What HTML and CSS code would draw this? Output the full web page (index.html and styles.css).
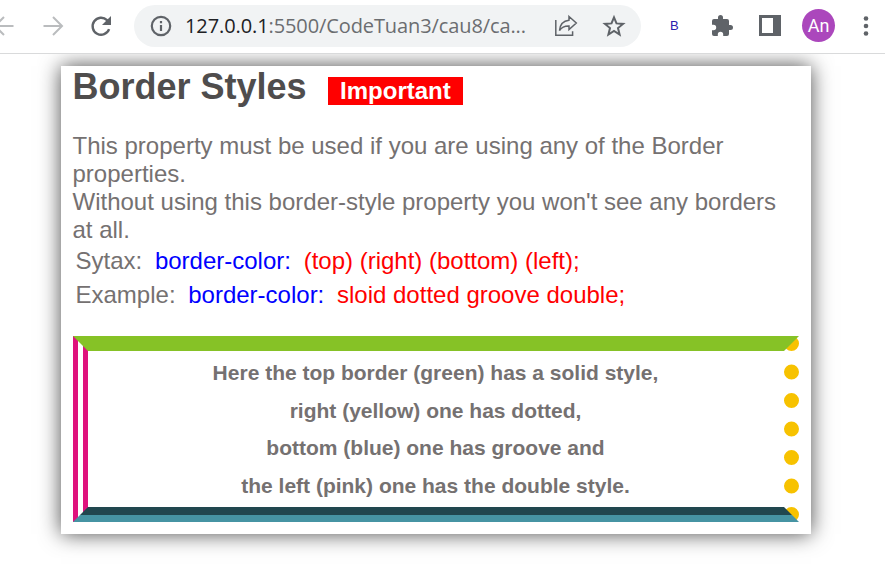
FILE: index.html
```html
<!DOCTYPE html>
<html lang="en">
<head>
<meta charset="utf-8">
<title>Border Styles</title>
<link rel="stylesheet" href="styles.css">
</head>
<body>
<header class="toolbar">
  <svg class="icon back" width="22" height="22" viewBox="0 0 22 22"><path d="M20.500 11H2M11 2L2 11l9 9"/></svg>
  <svg class="icon forward" width="22" height="22" viewBox="0 0 22 22"><path d="M1.500 11H20M11 2l9 9-9 9"/></svg>
  <svg class="icon reload" width="24" height="24" viewBox="0 0 24 24"><path class="line" d="M20.100 15.200A8.500 8.500 0 1 1 18 6.100L20 8"/><path class="solid" d="M22 2v9h-9z"/></svg>
  <div class="address">
    <svg class="icon info" width="22" height="22" viewBox="0 0 22 22"><circle cx="11" cy="11" r="9.200"/><path d="M11 10v6M11 6v2.200"/></svg>
    <span class="url"><span class="host">127.0.0.1</span>:5500/CodeTuan3/cau8/ca...</span>
    <svg class="icon share" width="24" height="24" viewBox="0 0 24 24"><path d="M1.800 6v15.200h16.800v-4M15 2.500l7.300 6.500-7.300 6.500V12C10.500 11.800 7.500 13.500 5.500 16.500 6 10.500 9.500 6.800 15 6.200z"/></svg>
    <svg class="icon star" width="24" height="24" viewBox="0 0 24 24"><path d="M12 3.300l2.500 6.100 6.600.5-5.100 4.200 1.600 6.400-5.600-3.500-5.600 3.500L8 14.100 2.900 9.900l6.600-.5z"/></svg>
  </div>
  <span class="ext">B</span>
  <svg class="puzzle" width="24" height="24" viewBox="0 0 24 24"><path d="M20.500 11H19V7a2 2 0 0 0-2-2h-4V3.500a2.500 2.500 0 0 0-5 0V5H4a2 2 0 0 0-2 2v3.800h1.500a2.700 2.700 0 0 1 0 5.400H2V20a2 2 0 0 0 2 2h3.800v-1.500a2.700 2.700 0 0 1 5.400 0V22H17a2 2 0 0 0 2-2v-4h1.500a2.500 2.500 0 0 0 0-5z"/></svg>
  <span class="panel"></span>
  <span class="avatar">An</span>
  <svg class="menu" width="6" height="20" viewBox="0 0 6 20"><circle cx="3" cy="2.500" r="2.300"/><circle cx="3" cy="10" r="2.300"/><circle cx="3" cy="17.500" r="2.300"/></svg>
</header>
<main class="card">
  <div class="heading"><h1>Border Styles</h1><span class="tag">Important</span></div>
  <p class="intro">This property must be used if you are using any of the Border properties.<br>Without using this border-style property you won't see any borders at all.</p>
  <div class="code"><span>Sytax:</span><span class="prop">border-color:</span><span class="value">(top) (right) (bottom) (left);</span></div>
  <div class="code"><span>Example:</span><span class="prop">border-color:</span><span class="value">sloid dotted groove double;</span></div>
  <div class="demo">
    <div>Here the top border (green) has a solid style,</div>
    <div>right (yellow) one has dotted,</div>
    <div>bottom (blue) one has groove and</div>
    <div>the left (pink) one has the double style.</div>
  </div>
</main>
</body>
</html>
```
FILE: styles.css
```css
* { box-sizing: border-box; }
body {
  margin: 0;
  height: 576px;
  overflow: hidden;
  background: #fff;
  color: #757171;
  font-family: "Liberation Sans", Arial, sans-serif;
  font-size: 24px;
}
svg { display: block; flex: none; }
.toolbar {
  display: flex;
  align-items: center;
  height: 54px;
  padding-bottom: 2px;
  background: #fff;
  border-bottom: 1px solid #d9dadb;
}
.icon { fill: none; stroke: #5f6368; stroke-width: 2; }
.back { margin-left: -7px; stroke: #babcbe; }
.forward { margin-left: 27px; stroke: #babcbe; }
.reload { margin-left: 25px; }
.line { stroke-width: 2.4; }
.solid { fill: #5f6368; stroke: none; }
.address {
  display: flex;
  flex: none;
  align-items: center;
  width: 507px;
  height: 42px;
  margin-left: 21px;
  padding-left: 16px;
  border-radius: 21px;
  background: #f1f3f4;
}
.info { stroke-width: 2.2; }
.url {
  width: 340px;
  margin-left: 13px;
  color: #6b6d70;
  font: 20px/43px "Open Sans", sans-serif;
  letter-spacing: -0.1px;
  white-space: nowrap;
}
.host { color: #202124; }
.share { margin-left: 29px; stroke-width: 1.5; }
.star { margin-left: 24px; stroke-width: 2; }
.ext {
  width: 10px;
  margin-left: 29px;
  color: #2a20ae;
  font: 13px/20px "Liberation Sans", sans-serif;
}
.puzzle { margin-left: 30px; fill: #5f6368; }
.panel {
  flex: none;
  width: 22px;
  height: 21px;
  margin-left: 25px;
  border: solid #5f6368;
  border-width: 3px 8px 3px 3px;
}
.avatar {
  flex: none;
  width: 33px;
  height: 33px;
  margin-left: 21px;
  border-radius: 50%;
  background: #ab47bc;
  color: #fff;
  font: 18px/34px Roboto, sans-serif;
  text-align: center;
}
.menu { margin-left: 28px; fill: #5f6368; }
.card {
  width: 750px;
  height: 468px;
  margin: 12px 0 0 61px;
  padding: 0 12px;
  background: #fff;
  box-shadow: 0 0 20px #4c4c4c;
  clip-path: inset(-12px -40px -40px -40px);
}
.heading { display: flex; align-items: flex-start; height: 66px; margin-left: -0.5px; }
h1 {
  margin: 0;
  color: #4f4d4d;
  font-size: 36px;
  line-height: 41px;
}
.tag {
  height: 28px;
  margin: 11px 0 0 21.5px;
  padding: 0 12px;
  background: #f00;
  color: #fff;
  font-weight: bold;
  line-height: 28px;
}
.intro { margin: 0 0 0 -0.5px; line-height: 28px; }
.code {
  display: flex;
  gap: 12.7px;
  height: 34px;
  padding-left: 2.5px;
  line-height: 34px;
}
.prop { color: #00f; }
.value { color: #f00; }
.demo {
  height: 186px;
  margin-top: 24px;
  padding: 3px 1px 0 0;
  border-width: 15px;
  border-style: solid dotted groove double;
  border-color: #86c226 #f7c200 #4694a3 #df127d;
  font-size: 21px;
  font-weight: bold;
  line-height: 37.6px;
  text-align: center;
}
```
